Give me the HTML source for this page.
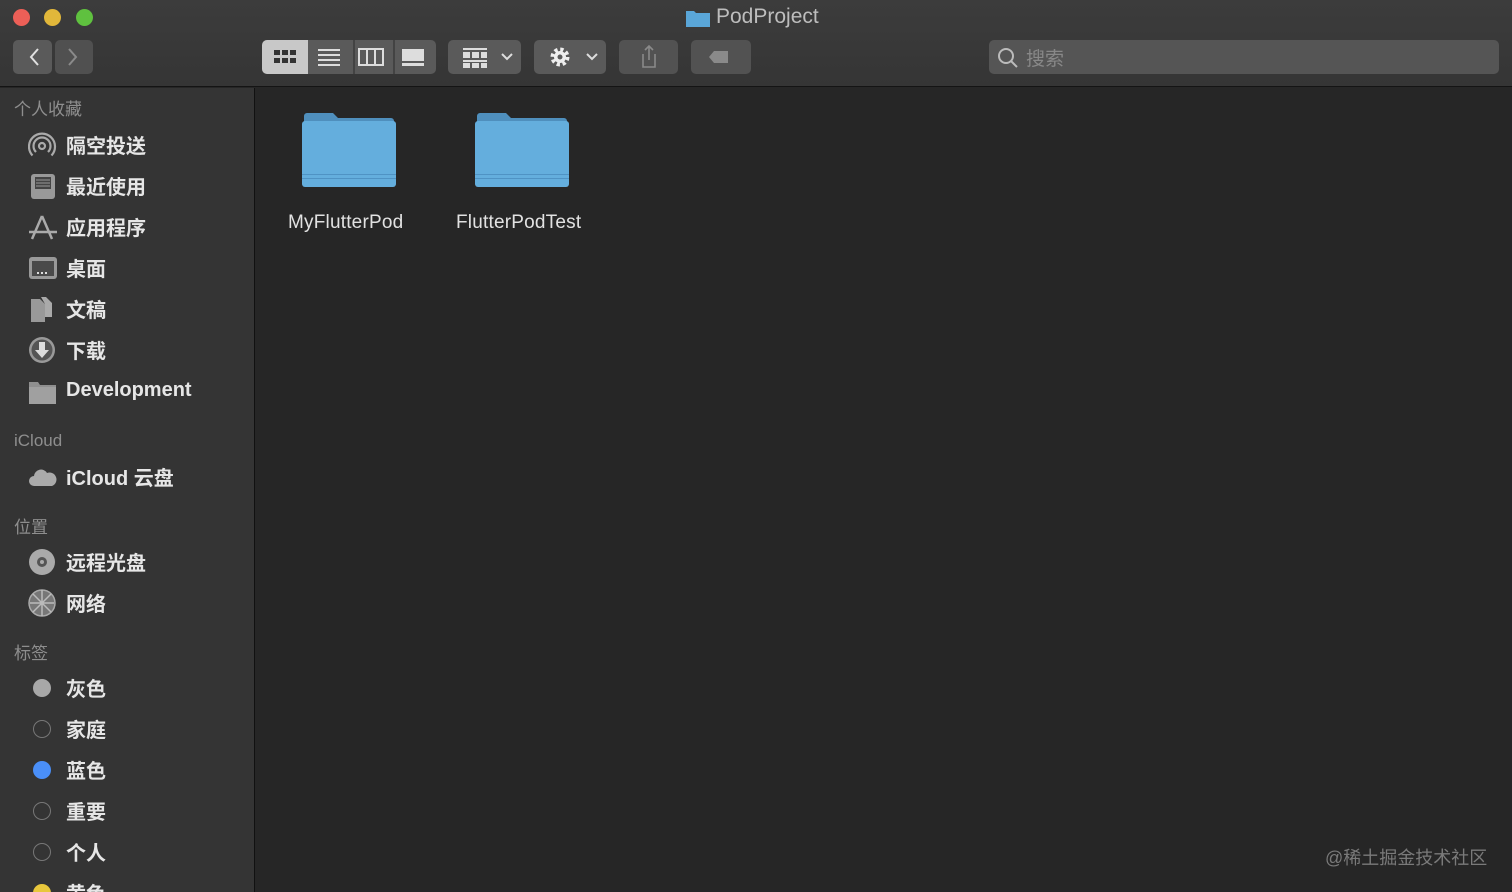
<!DOCTYPE html>
<html style="width:1512px;height:892px;overflow:hidden"><head><meta charset="utf-8"><style>
*{margin:0;padding:0;box-sizing:border-box}
body{width:1512px;height:892px;overflow:hidden;background:#262626;font-family:"Liberation Sans","Noto Sans CJK SC",sans-serif;position:relative}
.tb{position:absolute;left:0;top:0;width:1512px;height:87px;background:linear-gradient(#3c3c3c,#353535);border-bottom:1px solid #141414}
.dot{position:absolute;top:9px;width:17px;height:17px;border-radius:50%}
.btn{position:absolute;top:40px;height:34px;background:#5a5a5a;border-radius:5px}
.side{position:absolute;left:0;top:88px;width:255px;height:804px;background:#343434;border-right:1px solid #111;overflow:hidden}
.h{position:absolute;left:14px;font-size:17px;color:#8e8e8e}
.it{position:absolute;left:66px;font-size:20px;color:#e6e6e6;font-weight:bold}
.ic{position:absolute;left:28px}
.t{position:absolute;left:33px;width:18px;height:18px;border-radius:50%}
.fold{position:absolute;top:112px;width:94px;height:75px}
.lbl{position:absolute;top:212px;font-size:19px;color:#e2e2e2;letter-spacing:0.2px}
</style></head><body>
<div class="tb">
<div class="dot" style="left:13px;background:#ec5f57"></div>
<div class="dot" style="left:44px;background:#e1b73a"></div>
<div class="dot" style="left:76px;background:#5fc13f"></div>
<svg style="position:absolute;left:686px;top:8px" width="24" height="19"><path d="M0 3h8l2 2h14v14H0z" fill="#5aa6d8"/></svg>
<div style="position:absolute;left:716px;top:5px;font-size:21px;color:#bdbdbd">PodProject</div>
<div class="btn" style="left:13px;width:39px"></div>
<div class="btn" style="left:55px;width:38px;background:#505050"></div>
<svg style="position:absolute;left:13px;top:40px" width="80" height="34"><path d="M25 9l-7 8 7 8" stroke="#e0e0e0" stroke-width="2" fill="none"/><path d="M56 9l7 8-7 8" stroke="#8a8a8a" stroke-width="2" fill="none"/></svg>
<div class="btn" style="left:262px;width:174px"></div>
<div class="btn" style="left:262px;width:46px;background:#c8c8c8;border-radius:5px 0 0 5px"></div>
<svg style="position:absolute;left:262px;top:40px" width="174" height="34">
<g fill="#333"><rect x="12" y="10" width="6" height="5"/><rect x="20" y="10" width="6" height="5"/><rect x="28" y="10" width="6" height="5"/><rect x="12" y="18" width="6" height="5"/><rect x="20" y="18" width="6" height="5"/><rect x="28" y="18" width="6" height="5"/></g>
<g fill="#ddd"><rect x="56" y="9" width="22" height="2"/><rect x="56" y="14" width="22" height="2"/><rect x="56" y="19" width="22" height="2"/><rect x="56" y="24" width="22" height="2"/>
<rect x="97" y="9" width="24" height="16" fill="none" stroke="#ddd" stroke-width="2"/><rect x="104" y="9" width="2" height="16"/><rect x="112" y="9" width="2" height="16"/>
<rect x="140" y="9" width="22" height="12"/><rect x="140" y="23" width="22" height="3"/></g>
<g stroke="#2c2c2c"><line x1="92" y1="0" x2="92" y2="34"/><line x1="132" y1="0" x2="132" y2="34"/></g></svg>
<div class="btn" style="left:448px;width:73px"></div>
<svg style="position:absolute;left:448px;top:40px" width="73" height="34"><g fill="#ddd"><rect x="15" y="8" width="24" height="2"/><rect x="15" y="12" width="7" height="6"/><rect x="24" y="12" width="7" height="6"/><rect x="33" y="12" width="6" height="6"/><rect x="15" y="20" width="24" height="2"/><rect x="15" y="23" width="7" height="5"/><rect x="24" y="23" width="7" height="5"/><rect x="33" y="23" width="6" height="5"/></g><path d="M54 14l5 5 5-5" stroke="#ddd" stroke-width="2" fill="none"/></svg>
<div class="btn" style="left:534px;width:72px"></div>
<svg style="position:absolute;left:534px;top:40px" width="72" height="34"><circle cx="26" cy="17" r="7" fill="none" stroke="#eee" stroke-width="5" stroke-dasharray="3 2.5"/><circle cx="26" cy="17" r="6" fill="#eee"/><circle cx="26" cy="17" r="2.5" fill="#5a5a5a"/><path d="M53 14l5 5 5-5" stroke="#ddd" stroke-width="2" fill="none"/></svg>
<div class="btn" style="left:619px;width:59px;background:#525252"></div>
<svg style="position:absolute;left:619px;top:40px" width="59" height="34"><path d="M24 14v13h12V14M30 6v14M26 10l4-4 4 4" stroke="#8a8a8a" stroke-width="1.6" fill="none"/></svg>
<div class="btn" style="left:691px;width:60px;background:#525252"></div>
<svg style="position:absolute;left:691px;top:40px" width="60" height="34"><path d="M18 17l5-6h14v12H23z" fill="#8a8a8a"/></svg>
<div class="btn" style="left:989px;width:510px;height:34px;background:#555"></div>
<svg style="position:absolute;left:997px;top:47px" width="22" height="22"><circle cx="9" cy="9" r="7" stroke="#bbb" stroke-width="2" fill="none"/><path d="M14 14l6 6" stroke="#bbb" stroke-width="2"/></svg>
<div style="position:absolute;left:1026px;top:44px;font-size:19px;color:#888">搜索</div>
</div>
<div class="side">
<div class="h" style="top:7px">个人收藏</div>
<svg class="ic" style="top:44px" width="30" height="30"><g fill="none" stroke="#aaa" stroke-width="2.2"><circle cx="14" cy="14" r="3"/><path d="M8 20A8.5 8.5 0 1 1 20 20"/><path d="M4.5 23.5A13 13 0 1 1 23.5 23.5"/></g></svg>
<div class="it" style="top:42px">隔空投送</div>
<svg class="ic" style="top:84px" width="30" height="30"><rect x="3" y="2" width="24" height="25" rx="3" fill="#999"/><rect x="7" y="5" width="16" height="12" fill="#444"/><g stroke="#999"><line x1="8" y1="8" x2="22" y2="8"/><line x1="8" y1="11" x2="22" y2="11"/><line x1="8" y1="14" x2="22" y2="14"/></g></svg>
<div class="it" style="top:83px">最近使用</div>
<svg class="ic" style="top:125px" width="30" height="30"><g stroke="#aaa" stroke-width="2.5" fill="none"><path d="M14 3L4 26M14 3l10 23M1 19h28"/></g></svg>
<div class="it" style="top:124px">应用程序</div>
<svg class="ic" style="top:167px" width="30" height="28"><rect x="1" y="2" width="28" height="22" rx="3" fill="#999"/><rect x="4" y="6" width="22" height="15" fill="#4a4a4a"/><g fill="#ddd"><rect x="9" y="17" width="2" height="2"/><rect x="13" y="17" width="2" height="2"/><rect x="17" y="17" width="2" height="2"/></g></svg>
<div class="it" style="top:165px">桌面</div>
<svg class="ic" style="top:207px" width="30" height="30"><path d="M3 4h9l5 5v18H3z" fill="#999"/><path d="M13 2h5l6 6v14h-7V9z" fill="#aaa"/></svg>
<div class="it" style="top:206px">文稿</div>
<svg class="ic" style="top:248px" width="30" height="30"><circle cx="14" cy="14" r="13" fill="#999"/><circle cx="14" cy="14" r="10.5" fill="#555"/><path d="M11 6h6v8h4l-7 8-7-8h4z" fill="#ddd"/></svg>
<div class="it" style="top:247px">下载</div>
<svg class="ic" style="top:291px" width="30" height="26"><path d="M1 3h9l2 3h16v19H1z" fill="#8f8f8f"/><rect x="1" y="8" width="27" height="17" fill="#a0a0a0"/></svg>
<div class="it" style="top:291px">Development</div>
<div class="h" style="top:343px">iCloud</div>
<svg class="ic" style="top:378px" width="30" height="24"><path d="M6 20a5 5 0 0 1 0-10 7 7 0 0 1 13-3 6 6 0 0 1 5 13z" fill="#aaa"/></svg>
<div class="it" style="top:374px">iCloud 云盘</div>
<div class="h" style="top:425px">位置</div>
<svg class="ic" style="top:460px" width="30" height="30"><circle cx="14" cy="14" r="13" fill="#aaa"/><circle cx="14" cy="14" r="5" fill="#555"/><circle cx="14" cy="14" r="2" fill="#aaa"/></svg>
<div class="it" style="top:459px">远程光盘</div>
<svg class="ic" style="top:501px" width="30" height="30"><circle cx="14" cy="14" r="13" fill="#777" stroke="#aaa" stroke-width="1.5"/><g stroke="#bbb" fill="none" stroke-width="1.5"><path d="M2 14h24M14 1v26M5 5l18 18M23 5L5 23"/></g></svg>
<div class="it" style="top:500px">网络</div>
<div class="h" style="top:551px">标签</div>
<div class="t" style="top:591px;background:#a8a8a8"></div><div class="it" style="top:585px">灰色</div>
<div class="t" style="top:632px;border:1.5px solid #777"></div><div class="it" style="top:626px">家庭</div>
<div class="t" style="top:673px;background:#4a8ff8"></div><div class="it" style="top:667px">蓝色</div>
<div class="t" style="top:714px;border:1.5px solid #777"></div><div class="it" style="top:708px">重要</div>
<div class="t" style="top:755px;border:1.5px solid #777"></div><div class="it" style="top:749px">个人</div>
<div class="t" style="top:796px;background:#e8c73c"></div><div class="it" style="top:790px">黄色</div>
</div>
<svg class="fold" style="left:302px" viewBox="0 0 94 75"><path d="M2 4a3 3 0 0 1 3-3h26l5 5h53a3 3 0 0 1 3 3v64H2z" fill="#4f8fbd"/><rect x="0" y="9" width="94" height="66" rx="3" fill="#64aedd"/><rect x="0" y="62" width="94" height="1" fill="#4f93c4"/><rect x="0" y="66" width="94" height="1" fill="#4f93c4"/></svg>
<div class="lbl" style="left:288px">MyFlutterPod</div>
<svg class="fold" style="left:475px" viewBox="0 0 94 75"><path d="M2 4a3 3 0 0 1 3-3h26l5 5h53a3 3 0 0 1 3 3v64H2z" fill="#4f8fbd"/><rect x="0" y="9" width="94" height="66" rx="3" fill="#64aedd"/><rect x="0" y="62" width="94" height="1" fill="#4f93c4"/><rect x="0" y="66" width="94" height="1" fill="#4f93c4"/></svg>
<div class="lbl" style="left:456px">FlutterPodTest</div>
<div style="position:absolute;left:1325px;top:844px;font-size:18px;color:#7a7a7a">@稀土掘金技术社区</div>
</body></html>
